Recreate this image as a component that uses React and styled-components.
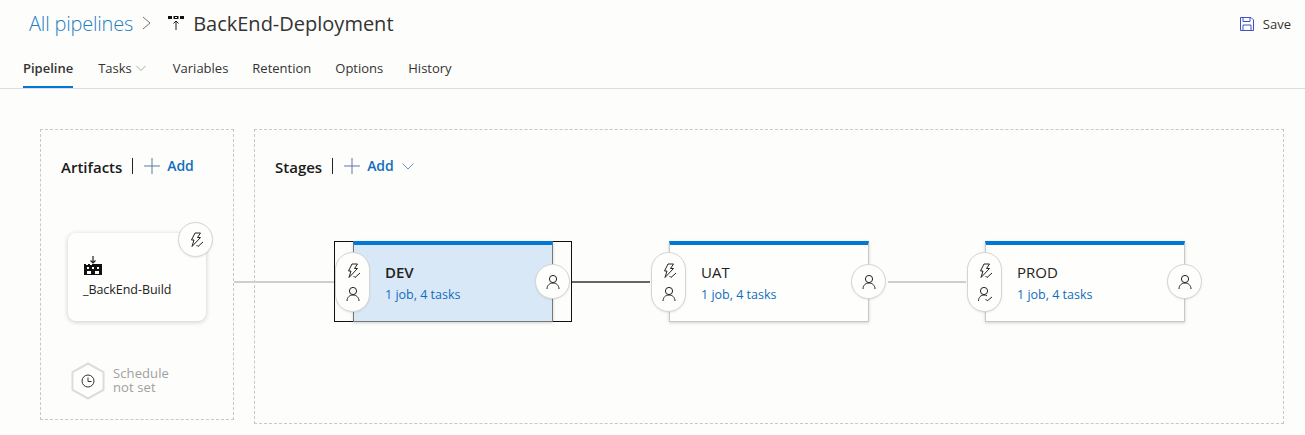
import { Fragment } from "react";
import styled, { createGlobalStyle } from "styled-components";

const GlobalStyle = createGlobalStyle`
  * { box-sizing: border-box; }
  html, body { margin: 0; padding: 0; background: #fdfdfb; }
  body { font-family: "Open Sans", "Noto Sans", sans-serif; color: #333; }
`;

const Page = styled.div`
  width: 1305px;
  height: 435px;
  overflow: hidden;
  background: #fdfdfb;
`;

const Header = styled.header`
  height: 89px;
  border-bottom: 1px solid #dcdcdc;
  padding: 0 14px 0 23px;
`;

const TitleRow = styled.div`
  display: flex;
  align-items: center;
  height: 48px;
  padding-bottom: 2px;
`;

const Crumb = styled.span`
  margin-left: 6px;
  font-size: 20px;
  font-weight: 300;
  color: #1f7fc4;
  letter-spacing: -0.2px;
`;

const Title = styled.span`
  margin-left: 9px;
  font-size: 20px;
  color: #333;
`;

const CrumbArrow = styled.svg`
  width: 10px;
  height: 14px;
  margin-left: 9px;
  margin-right: 16px;
  fill: none;
  stroke: #777;
  stroke-width: 1;
`;

const SaveButton = styled.div`
  margin: 2px 0 0 auto;
  display: flex;
  align-items: center;
  gap: 9px;
  font-size: 13px;
  color: #333;
`;

const Tabs = styled.nav`
  display: flex;
  height: 40px;
`;

const Tab = styled.div`
  display: flex;
  align-items: center;
  gap: 4px;
  height: 40px;
  padding-top: 2px;
  margin-right: ${(p) => p.$gap}px;
  font-size: 13px;
  font-weight: ${(p) => (p.$active ? 600 : 400)};
  color: #333;
  border-bottom: 2px solid ${(p) => (p.$active ? "#0078d4" : "transparent")};
`;

const Canvas = styled.main`
  display: flex;
  gap: 20px;
  padding: 40px 21px 0 40px;
`;

const Panel = styled.section`
  flex: ${(p) => (p.$grow ? 1 : "none")};
  width: ${(p) => (p.$grow ? "auto" : "194px")};
  height: ${(p) => p.$height}px;
  border: 1px dashed #c8c8c8;
  padding: 24px 20px 0;
`;

const PanelHead = styled.div`
  display: flex;
  align-items: center;
  height: 24px;
`;

const PanelTitle = styled.span`
  font-size: 15px;
  font-weight: 600;
  color: #1a1a1a;
  padding-top: 1px;
`;

const Separator = styled.span`
  width: 1px;
  height: 16px;
  margin: 0 11px 0 10px;
  background: #222;
`;

const AddLabel = styled.span`
  margin: 0 8px 2px 7px;
  font-size: 14px;
  font-weight: 600;
  color: #106ebe;
  letter-spacing: -0.1px;
`;

const ArtifactCard = styled.div`
  position: relative;
  width: 138px;
  height: 88px;
  margin: 55px 0 0 7px;
  padding: 23px 0 0 16px;
  background: #fefefc;
  border-radius: 8px;
  box-shadow: 0 1px 5px rgba(0, 0, 0, 0.2);
`;

const ArtifactName = styled.div`
  margin: 5px 0 0 -1px;
  font-size: 12.5px;
  color: #222;
  letter-spacing: -0.05px;
`;

const Circle = styled.div`
  position: absolute;
  top: ${(p) => p.$top};
  right: ${(p) => p.$right};
  display: flex;
  align-items: center;
  justify-content: center;
  width: 35px;
  height: 35px;
  background: #fefefc;
  border-radius: 50%;
  border: 1px solid #d4d4d4;
  box-shadow: 0 1px 2px rgba(0, 0, 0, 0.08);
`;

const Schedule = styled.div`
  display: flex;
  align-items: center;
  gap: 8px;
  margin: 41px 0 0 10px;
`;

const ScheduleText = styled.div`
  margin-top: -2px;
  font-size: 13px;
  line-height: 14px;
  color: #a0a0a0;
  letter-spacing: 0.1px;
`;

const StageRow = styled.div`
  display: flex;
  align-items: center;
  margin: 63px 0 0 -41px;
`;

const Connector = styled.div`
  flex: none;
  width: ${(p) => p.$width}px;
  height: 2px;
  background: ${(p) => (p.$dark ? "#666" : "#cfcfcd")};
`;

const StageFrame = styled.div`
  position: relative;
  flex: none;
  width: 238px;
  height: 81px;
  padding: 0 18px;
  border: 1px solid ${(p) => (p.$selected ? "#111" : "transparent")};
`;

const StageCard = styled.div`
  height: 81px;
  margin: -1px 0;
  padding: 18px 0 0 31px;
  background: ${(p) => (p.$selected ? "#d9e8f6" : "#fefefc")};
  border: 1px solid ${(p) => (p.$selected ? "#777" : "#c8c8c8")};
  border-top: 4px solid #0078d4;
  box-shadow: 0 1px 3px rgba(0, 0, 0, 0.18);
`;

const StageName = styled.div`
  font-size: 15px;
  line-height: 18px;
  font-weight: ${(p) => (p.$selected ? 600 : 400)};
  color: #222;
`;

const StageInfo = styled.div`
  margin-top: 6px;
  font-size: 12.5px;
  line-height: 16px;
  color: #106ebe;
`;

const Pill = styled.div`
  position: absolute;
  left: 0;
  top: 10px;
  display: flex;
  flex-direction: column;
  align-items: center;
  justify-content: center;
  gap: 7px;
  width: 35px;
  height: 60px;
  background: #fefefc;
  border-radius: 18px;
  border: 1px solid #d4d4d4;
  box-shadow: 0 1px 2px rgba(0, 0, 0, 0.08);
`;

const Icon = styled.svg`
  display: block;
  flex: none;
  fill: none;
  stroke: ${(p) => p.$stroke || "#222"};
  stroke-width: 1;
`;

const Bolt = () => (
  <Icon width="16" height="16" viewBox="0 0 16 16">
    <path d="M7 1h5.5L9.5 5.5H12.5L4 14.5l2-6.5H3.5z" />
    <path d="M8.5 13l1.5 1.5L15 10" />
  </Icon>
);

const Person = () => (
  <Icon width="16" height="16" viewBox="0 0 16 16">
    <circle cx="8" cy="5" r="3.6" />
    <path d="M2 15c0-3.6 2.6-6 6-6s6 2.4 6 6" />
  </Icon>
);

const PersonCheck = () => (
  <Icon width="16" height="16" viewBox="0 0 16 16">
    <circle cx="7" cy="5" r="3.6" />
    <path d="M1.5 15c0-3.6 2.4-6 5.5-6 1.2 0 2.2.3 3 .9" />
    <path d="M8.5 13l1.8 1.8L15 11" />
  </Icon>
);

const Plus = () => (
  <Icon width="16" height="16" viewBox="0 0 16 16" $stroke="#5b7ba5">
    <path d="M8 0v16M0 8h16" />
  </Icon>
);

const Chevron = ({ size = 12, color = "#6b8fbf" }) => (
  <Icon width={size} height={size} viewBox="0 0 12 12" $stroke={color}>
    <path d="M.5 3.5L6 9l5.5-5.5" />
  </Icon>
);

const PipelineIcon = () => (
  <Icon width="16" height="16" viewBox="0 0 16 16">
    <path d="M0 1h4v3H0zM5.5 1h5v3h-5zM12 1h4v3h-4z" fill="#111" stroke="none" />
    <path d="M7 2h2v1H7z" fill="#fff" stroke="none" />
    <path d="M8 15V6M5.5 8.5L8 6l2.5 2.5" />
  </Icon>
);

const BuildIcon = () => (
  <Icon width="18" height="20" viewBox="0 0 18 20">
    <path d="M9 0v7M6.5 4.5L9 7l2.5-2.5" strokeWidth="1.2" />
    <path d="M0 8h2v1h2V8h2v1h2V8h10v11H0z" fill="#111" stroke="none" />
    <path d="M3 11h2v2H3zM8 11h2v2H8zM13 11h2v2h-2zM3 15h4v3H3zM11 15h4v3h-4z" fill="#fff" stroke="none" />
  </Icon>
);

const SaveIcon = () => (
  <Icon width="14" height="14" viewBox="0 0 14 14" $stroke="#3f51c7">
    <path d="M.5.5h10.5l2.5 2.5v10.5H.5z" />
    <path d="M3 .5v4h7v-4M3 13.5V8h8v5.5" />
  </Icon>
);

const ClockHex = () => (
  <Icon width="34" height="38" viewBox="0 0 34 38" $stroke="#333">
    <path d="M17 1.5L32.5 10v18L17 36.5 1.5 28V10z" fill="#fefefc" stroke="#dcdcdc" strokeWidth="2" />
    <circle cx="17" cy="19" r="6" />
    <path d="M17 15.5V19.5h3.5" />
  </Icon>
);

const stages = [
  { name: "DEV", selected: true, approval: <Person /> },
  { name: "UAT", approval: <Person />, link: 78, dark: true },
  { name: "PROD", approval: <PersonCheck />, link: 78 },
];

const tabs = [
  { label: "Pipeline", gap: 25, active: true },
  { label: "Tasks", gap: 27, menu: true },
  { label: "Variables", gap: 24 },
  { label: "Retention", gap: 24 },
  { label: "Options", gap: 25 },
  { label: "History", gap: 0 },
];

const App = () => {
  return (
    <Page>
      <GlobalStyle />
      <Header>
        <TitleRow>
          <Crumb>All pipelines</Crumb>
          <CrumbArrow viewBox="0 0 10 14">
            <path d="M1 1l7 6-7 6" />
          </CrumbArrow>
          <PipelineIcon />
          <Title>BackEnd-Deployment</Title>
          <SaveButton>
            <SaveIcon />
            Save
          </SaveButton>
        </TitleRow>
        <Tabs>
          {tabs.map((tab) => (
            <Tab key={tab.label} $active={tab.active} $gap={tab.gap}>
              {tab.label}
              {tab.menu && <Chevron size={10} color="#999" />}
            </Tab>
          ))}
        </Tabs>
      </Header>
      <Canvas>
        <Panel $height={291}>
          <PanelHead>
            <PanelTitle>Artifacts</PanelTitle>
            <Separator />
            <Plus />
            <AddLabel>Add</AddLabel>
          </PanelHead>
          <ArtifactCard>
            <BuildIcon />
            <ArtifactName>_BackEnd-Build</ArtifactName>
            <Circle $top="-11px" $right="-7px">
              <Bolt />
            </Circle>
          </ArtifactCard>
          <Schedule>
            <ClockHex />
            <ScheduleText>
              Schedule
              <br />
              not set
            </ScheduleText>
          </Schedule>
        </Panel>
        <Panel $grow $height={295}>
          <PanelHead>
            <PanelTitle>Stages</PanelTitle>
            <Separator />
            <Plus />
            <AddLabel>Add</AddLabel>
            <Chevron />
          </PanelHead>
          <StageRow>
            <Connector $width={100} />
            {stages.map((stage) => (
              <Fragment key={stage.name}>
                {stage.link && <Connector $width={stage.link} $dark={stage.dark} />}
                <StageFrame $selected={stage.selected}>
                  <StageCard $selected={stage.selected}>
                    <StageName $selected={stage.selected}>{stage.name}</StageName>
                    <StageInfo>1 job, 4 tasks</StageInfo>
                  </StageCard>
                  <Pill>
                    <Bolt />
                    {stage.approval}
                  </Pill>
                  <Circle $top="22px" $right="1px">
                    <Person />
                  </Circle>
                </StageFrame>
              </Fragment>
            ))}
          </StageRow>
        </Panel>
      </Canvas>
    </Page>
  );
};

export default App;
